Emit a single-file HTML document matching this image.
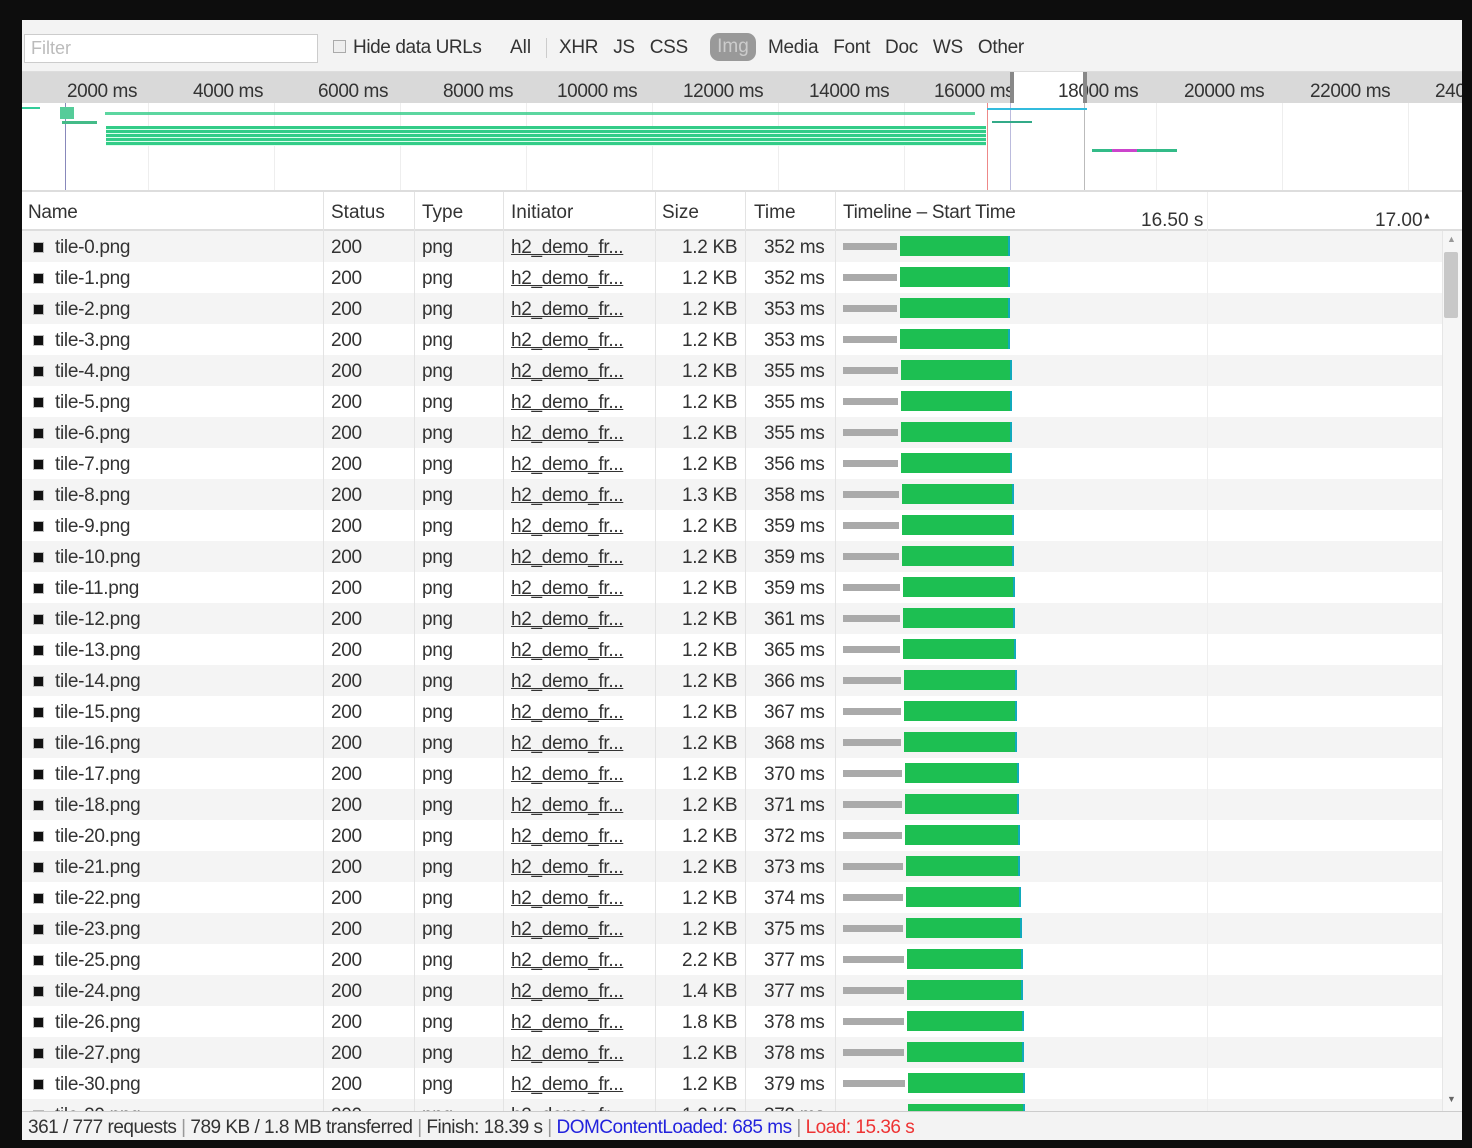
<!DOCTYPE html>
<html><head><meta charset="utf-8"><style>
*{margin:0;padding:0;box-sizing:border-box}
body{width:1472px;height:1148px;background:#0d0d0d;position:relative;overflow:hidden;font-family:"Liberation Sans",sans-serif;color:#333;font-size:19px}
.p{position:absolute;left:22px;top:20px;width:1440px;height:1120px;background:#fff;overflow:hidden}
.a{position:absolute;white-space:nowrap}
.tb{left:0;top:0;width:1440px;height:52px;background:#f3f3f3;border-bottom:1px solid #ddd}
.rl{left:0;top:52px;width:1440px;height:31px;background:#d9d9d9}
.row{position:absolute;left:0;width:1420px;height:31px}
.row span{position:absolute;top:6px;white-space:nowrap;letter-spacing:-0.3px}
.g{background:#f4f4f4}
.ic{position:absolute;left:11px;top:11px;width:11px;height:11px;background:#111;border:1px solid #bbb}
.ini{text-decoration:underline;color:#333}
.vl{position:absolute;top:0;width:1px;height:100%;background:#e3e3e3}
</style></head><body>
<div class="p">
<div class="a tb"></div>
<div class="a" style="left:2px;top:14px;width:294px;height:29px;border:1px solid #ccc;background:#fff;color:#bbb;padding:3px 6px;font-size:18px">Filter</div>
<div class="a" style="left:311px;top:20px;width:13px;height:13px;border:1px solid #aaa;background:#eee"></div>
<div class="a" style="left:331px;top:17px;letter-spacing:-0.4px">Hide data URLs</div>
<div class="a" style="left:488px;top:17px">All</div>
<div class="a" style="left:524px;top:18px;width:1px;height:20px;background:#ccc"></div>
<div class="a" style="left:537px;top:17px;word-spacing:10px;letter-spacing:-0.3px">XHR JS CSS</div>
<div class="a" style="left:688px;top:13px;width:46px;height:28px;border-radius:9px;background:#999;color:#ccc;text-align:center;padding-top:3px">Img</div>
<div class="a" style="left:746px;top:17px;word-spacing:10px;letter-spacing:-0.3px">Media Font Doc WS Other</div>
<div class="a rl"></div>
<div class="a" style="left:990px;top:52px;width:73px;height:31px;background:#fff"></div>
<div class="a" style="left:0;top:61px;font-size:19px;letter-spacing:-0.4px">
<span class="a" style="left:45px">2000 ms</span><span class="a" style="left:171px">4000 ms</span><span class="a" style="left:296px">6000 ms</span><span class="a" style="left:421px">8000 ms</span><span class="a" style="left:535px">10000 ms</span><span class="a" style="left:661px">12000 ms</span><span class="a" style="left:787px">14000 ms</span><span class="a" style="left:912px">16000 ms</span><span class="a" style="left:1036px">18000 ms</span><span class="a" style="left:1162px">20000 ms</span><span class="a" style="left:1288px">22000 ms</span><span class="a" style="left:1413px">24000 ms</span></div>
<div class="a" style="left:988px;top:52px;width:4px;height:31px;background:#888"></div>
<div class="a" style="left:1061px;top:52px;width:4px;height:31px;background:#888"></div>
<div class="a" style="left:126px;top:83px;width:1px;height:87px;background:#eee"></div>
<div class="a" style="left:252px;top:83px;width:1px;height:87px;background:#eee"></div>
<div class="a" style="left:378px;top:83px;width:1px;height:87px;background:#eee"></div>
<div class="a" style="left:504px;top:83px;width:1px;height:87px;background:#eee"></div>
<div class="a" style="left:630px;top:83px;width:1px;height:87px;background:#eee"></div>
<div class="a" style="left:756px;top:83px;width:1px;height:87px;background:#eee"></div>
<div class="a" style="left:882px;top:83px;width:1px;height:87px;background:#eee"></div>
<div class="a" style="left:1134px;top:83px;width:1px;height:87px;background:#eee"></div>
<div class="a" style="left:1260px;top:83px;width:1px;height:87px;background:#eee"></div>
<div class="a" style="left:1386px;top:83px;width:1px;height:87px;background:#eee"></div>
<div class="a" style="left:43px;top:83px;width:1px;height:87px;background:#8888bb"></div>
<div class="a" style="left:965px;top:83px;width:1px;height:87px;background:#e88"></div>
<div class="a" style="left:988px;top:83px;width:1px;height:87px;background:#bbd"></div>
<div class="a" style="left:1062px;top:83px;width:1px;height:87px;background:#bbb"></div>
<div class="a" style="left:0;top:87px;width:18px;height:2px;background:#3c9"></div>
<div class="a" style="left:38px;top:87px;width:14px;height:12px;background:#5c9"></div>
<div class="a" style="left:40px;top:101px;width:35px;height:3px;background:#4b8"></div>
<div class="a" style="left:83px;top:92px;width:870px;height:3px;background:#3c8c"></div>
<div class="a" style="left:84px;top:106px;width:880px;height:20px;background:repeating-linear-gradient(#3c8 0 3px,#dfe 3px 4px)"></div>
<div class="a" style="left:965px;top:88px;width:100px;height:2px;background:#3bd"></div>
<div class="a" style="left:970px;top:101px;width:40px;height:2px;background:#3a8"></div>
<div class="a" style="left:1070px;top:129px;width:85px;height:3px;background:#3b8"></div>
<div class="a" style="left:1090px;top:129px;width:25px;height:3px;background:#c4c"></div>
<div class="a" style="left:0;top:170px;width:1440px;height:2px;background:#ddd"></div>
<div class="a" style="left:0;top:172px;width:1440px;height:39px;background:#fff;border-bottom:2px solid #ddd"></div>
<div class="a" style="left:6px;top:182px;letter-spacing:-0.3px">Name</div>
<div class="a" style="left:309px;top:182px">Status</div>
<div class="a" style="left:400px;top:182px">Type</div>
<div class="a" style="left:489px;top:182px">Initiator</div>
<div class="a" style="left:640px;top:182px">Size</div>
<div class="a" style="left:732px;top:182px">Time</div>
<div class="a" style="left:821px;top:182px;letter-spacing:-0.3px">Timeline – Start Time</div>
<div class="a" style="left:1119px;top:190px">16.50 s</div>
<div class="a" style="left:1353px;top:190px">17.00<sup style="font-size:9px">▲</sup></div>
<div class="a" style="left:0;top:211px;width:1420px;height:880px">
<div class="row g" style="top:0"></div><div class="row g" style="top:62px"></div><div class="row g" style="top:124px"></div><div class="row g" style="top:186px"></div><div class="row g" style="top:248px"></div><div class="row g" style="top:310px"></div><div class="row g" style="top:372px"></div><div class="row g" style="top:434px"></div><div class="row g" style="top:496px"></div><div class="row g" style="top:558px"></div><div class="row g" style="top:620px"></div><div class="row g" style="top:682px"></div><div class="row g" style="top:744px"></div><div class="row g" style="top:806px"></div><div class="row g" style="top:868px"></div>
</div>
<div class="a" style="left:0;top:172px;width:1420px;height:920px">
<div class="vl" style="left:301px"></div><div class="vl" style="left:392px"></div><div class="vl" style="left:481px"></div><div class="vl" style="left:633px"></div><div class="vl" style="left:723px"></div><div class="vl" style="left:813px"></div><div class="vl" style="left:1185px;background:#eee"></div>
</div>
<div class="a" style="left:0;top:211px;width:1420px;height:881px;overflow:hidden">
<div class="row" style="top:0px"><i class="ic"></i><span style="left:33px">tile-0.png</span><span style="left:309px">200</span><span style="left:400px">png</span><span class="ini" style="left:489px">h2_demo_fr...</span><span style="left:660px">1.2 KB</span><span style="left:742px">352 ms</span><b class="a" style="left:821px;top:12px;width:54px;height:7px;background:#aaa"></b><b class="a" style="left:878px;top:5px;width:110px;height:20px;background:#1dbf52;border-right:2px solid #1ab"></b></div>
<div class="row" style="top:31px"><i class="ic"></i><span style="left:33px">tile-1.png</span><span style="left:309px">200</span><span style="left:400px">png</span><span class="ini" style="left:489px">h2_demo_fr...</span><span style="left:660px">1.2 KB</span><span style="left:742px">352 ms</span><b class="a" style="left:821px;top:12px;width:54px;height:7px;background:#aaa"></b><b class="a" style="left:878px;top:5px;width:110px;height:20px;background:#1dbf52;border-right:2px solid #1ab"></b></div>
<div class="row" style="top:62px"><i class="ic"></i><span style="left:33px">tile-2.png</span><span style="left:309px">200</span><span style="left:400px">png</span><span class="ini" style="left:489px">h2_demo_fr...</span><span style="left:660px">1.2 KB</span><span style="left:742px">353 ms</span><b class="a" style="left:821px;top:12px;width:54px;height:7px;background:#aaa"></b><b class="a" style="left:878px;top:5px;width:110px;height:20px;background:#1dbf52;border-right:2px solid #1ab"></b></div>
<div class="row" style="top:93px"><i class="ic"></i><span style="left:33px">tile-3.png</span><span style="left:309px">200</span><span style="left:400px">png</span><span class="ini" style="left:489px">h2_demo_fr...</span><span style="left:660px">1.2 KB</span><span style="left:742px">353 ms</span><b class="a" style="left:821px;top:12px;width:54px;height:7px;background:#aaa"></b><b class="a" style="left:878px;top:5px;width:110px;height:20px;background:#1dbf52;border-right:2px solid #1ab"></b></div>
<div class="row" style="top:124px"><i class="ic"></i><span style="left:33px">tile-4.png</span><span style="left:309px">200</span><span style="left:400px">png</span><span class="ini" style="left:489px">h2_demo_fr...</span><span style="left:660px">1.2 KB</span><span style="left:742px">355 ms</span><b class="a" style="left:821px;top:12px;width:55px;height:7px;background:#aaa"></b><b class="a" style="left:879px;top:5px;width:111px;height:20px;background:#1dbf52;border-right:2px solid #1ab"></b></div>
<div class="row" style="top:155px"><i class="ic"></i><span style="left:33px">tile-5.png</span><span style="left:309px">200</span><span style="left:400px">png</span><span class="ini" style="left:489px">h2_demo_fr...</span><span style="left:660px">1.2 KB</span><span style="left:742px">355 ms</span><b class="a" style="left:821px;top:12px;width:55px;height:7px;background:#aaa"></b><b class="a" style="left:879px;top:5px;width:111px;height:20px;background:#1dbf52;border-right:2px solid #1ab"></b></div>
<div class="row" style="top:186px"><i class="ic"></i><span style="left:33px">tile-6.png</span><span style="left:309px">200</span><span style="left:400px">png</span><span class="ini" style="left:489px">h2_demo_fr...</span><span style="left:660px">1.2 KB</span><span style="left:742px">355 ms</span><b class="a" style="left:821px;top:12px;width:55px;height:7px;background:#aaa"></b><b class="a" style="left:879px;top:5px;width:111px;height:20px;background:#1dbf52;border-right:2px solid #1ab"></b></div>
<div class="row" style="top:217px"><i class="ic"></i><span style="left:33px">tile-7.png</span><span style="left:309px">200</span><span style="left:400px">png</span><span class="ini" style="left:489px">h2_demo_fr...</span><span style="left:660px">1.2 KB</span><span style="left:742px">356 ms</span><b class="a" style="left:821px;top:12px;width:55px;height:7px;background:#aaa"></b><b class="a" style="left:879px;top:5px;width:111px;height:20px;background:#1dbf52;border-right:2px solid #1ab"></b></div>
<div class="row" style="top:248px"><i class="ic"></i><span style="left:33px">tile-8.png</span><span style="left:309px">200</span><span style="left:400px">png</span><span class="ini" style="left:489px">h2_demo_fr...</span><span style="left:660px">1.3 KB</span><span style="left:742px">358 ms</span><b class="a" style="left:821px;top:12px;width:56px;height:7px;background:#aaa"></b><b class="a" style="left:880px;top:5px;width:112px;height:20px;background:#1dbf52;border-right:2px solid #1ab"></b></div>
<div class="row" style="top:279px"><i class="ic"></i><span style="left:33px">tile-9.png</span><span style="left:309px">200</span><span style="left:400px">png</span><span class="ini" style="left:489px">h2_demo_fr...</span><span style="left:660px">1.2 KB</span><span style="left:742px">359 ms</span><b class="a" style="left:821px;top:12px;width:56px;height:7px;background:#aaa"></b><b class="a" style="left:880px;top:5px;width:112px;height:20px;background:#1dbf52;border-right:2px solid #1ab"></b></div>
<div class="row" style="top:310px"><i class="ic"></i><span style="left:33px">tile-10.png</span><span style="left:309px">200</span><span style="left:400px">png</span><span class="ini" style="left:489px">h2_demo_fr...</span><span style="left:660px">1.2 KB</span><span style="left:742px">359 ms</span><b class="a" style="left:821px;top:12px;width:56px;height:7px;background:#aaa"></b><b class="a" style="left:880px;top:5px;width:112px;height:20px;background:#1dbf52;border-right:2px solid #1ab"></b></div>
<div class="row" style="top:341px"><i class="ic"></i><span style="left:33px">tile-11.png</span><span style="left:309px">200</span><span style="left:400px">png</span><span class="ini" style="left:489px">h2_demo_fr...</span><span style="left:660px">1.2 KB</span><span style="left:742px">359 ms</span><b class="a" style="left:821px;top:12px;width:57px;height:7px;background:#aaa"></b><b class="a" style="left:881px;top:5px;width:112px;height:20px;background:#1dbf52;border-right:2px solid #1ab"></b></div>
<div class="row" style="top:372px"><i class="ic"></i><span style="left:33px">tile-12.png</span><span style="left:309px">200</span><span style="left:400px">png</span><span class="ini" style="left:489px">h2_demo_fr...</span><span style="left:660px">1.2 KB</span><span style="left:742px">361 ms</span><b class="a" style="left:821px;top:12px;width:57px;height:7px;background:#aaa"></b><b class="a" style="left:881px;top:5px;width:112px;height:20px;background:#1dbf52;border-right:2px solid #1ab"></b></div>
<div class="row" style="top:403px"><i class="ic"></i><span style="left:33px">tile-13.png</span><span style="left:309px">200</span><span style="left:400px">png</span><span class="ini" style="left:489px">h2_demo_fr...</span><span style="left:660px">1.2 KB</span><span style="left:742px">365 ms</span><b class="a" style="left:821px;top:12px;width:57px;height:7px;background:#aaa"></b><b class="a" style="left:881px;top:5px;width:113px;height:20px;background:#1dbf52;border-right:2px solid #1ab"></b></div>
<div class="row" style="top:434px"><i class="ic"></i><span style="left:33px">tile-14.png</span><span style="left:309px">200</span><span style="left:400px">png</span><span class="ini" style="left:489px">h2_demo_fr...</span><span style="left:660px">1.2 KB</span><span style="left:742px">366 ms</span><b class="a" style="left:821px;top:12px;width:58px;height:7px;background:#aaa"></b><b class="a" style="left:882px;top:5px;width:113px;height:20px;background:#1dbf52;border-right:2px solid #1ab"></b></div>
<div class="row" style="top:465px"><i class="ic"></i><span style="left:33px">tile-15.png</span><span style="left:309px">200</span><span style="left:400px">png</span><span class="ini" style="left:489px">h2_demo_fr...</span><span style="left:660px">1.2 KB</span><span style="left:742px">367 ms</span><b class="a" style="left:821px;top:12px;width:58px;height:7px;background:#aaa"></b><b class="a" style="left:882px;top:5px;width:113px;height:20px;background:#1dbf52;border-right:2px solid #1ab"></b></div>
<div class="row" style="top:496px"><i class="ic"></i><span style="left:33px">tile-16.png</span><span style="left:309px">200</span><span style="left:400px">png</span><span class="ini" style="left:489px">h2_demo_fr...</span><span style="left:660px">1.2 KB</span><span style="left:742px">368 ms</span><b class="a" style="left:821px;top:12px;width:58px;height:7px;background:#aaa"></b><b class="a" style="left:882px;top:5px;width:113px;height:20px;background:#1dbf52;border-right:2px solid #1ab"></b></div>
<div class="row" style="top:527px"><i class="ic"></i><span style="left:33px">tile-17.png</span><span style="left:309px">200</span><span style="left:400px">png</span><span class="ini" style="left:489px">h2_demo_fr...</span><span style="left:660px">1.2 KB</span><span style="left:742px">370 ms</span><b class="a" style="left:821px;top:12px;width:59px;height:7px;background:#aaa"></b><b class="a" style="left:883px;top:5px;width:114px;height:20px;background:#1dbf52;border-right:2px solid #1ab"></b></div>
<div class="row" style="top:558px"><i class="ic"></i><span style="left:33px">tile-18.png</span><span style="left:309px">200</span><span style="left:400px">png</span><span class="ini" style="left:489px">h2_demo_fr...</span><span style="left:660px">1.2 KB</span><span style="left:742px">371 ms</span><b class="a" style="left:821px;top:12px;width:59px;height:7px;background:#aaa"></b><b class="a" style="left:883px;top:5px;width:114px;height:20px;background:#1dbf52;border-right:2px solid #1ab"></b></div>
<div class="row" style="top:589px"><i class="ic"></i><span style="left:33px">tile-20.png</span><span style="left:309px">200</span><span style="left:400px">png</span><span class="ini" style="left:489px">h2_demo_fr...</span><span style="left:660px">1.2 KB</span><span style="left:742px">372 ms</span><b class="a" style="left:821px;top:12px;width:59px;height:7px;background:#aaa"></b><b class="a" style="left:883px;top:5px;width:115px;height:20px;background:#1dbf52;border-right:2px solid #1ab"></b></div>
<div class="row" style="top:620px"><i class="ic"></i><span style="left:33px">tile-21.png</span><span style="left:309px">200</span><span style="left:400px">png</span><span class="ini" style="left:489px">h2_demo_fr...</span><span style="left:660px">1.2 KB</span><span style="left:742px">373 ms</span><b class="a" style="left:821px;top:12px;width:60px;height:7px;background:#aaa"></b><b class="a" style="left:884px;top:5px;width:114px;height:20px;background:#1dbf52;border-right:2px solid #1ab"></b></div>
<div class="row" style="top:651px"><i class="ic"></i><span style="left:33px">tile-22.png</span><span style="left:309px">200</span><span style="left:400px">png</span><span class="ini" style="left:489px">h2_demo_fr...</span><span style="left:660px">1.2 KB</span><span style="left:742px">374 ms</span><b class="a" style="left:821px;top:12px;width:60px;height:7px;background:#aaa"></b><b class="a" style="left:884px;top:5px;width:115px;height:20px;background:#1dbf52;border-right:2px solid #1ab"></b></div>
<div class="row" style="top:682px"><i class="ic"></i><span style="left:33px">tile-23.png</span><span style="left:309px">200</span><span style="left:400px">png</span><span class="ini" style="left:489px">h2_demo_fr...</span><span style="left:660px">1.2 KB</span><span style="left:742px">375 ms</span><b class="a" style="left:821px;top:12px;width:60px;height:7px;background:#aaa"></b><b class="a" style="left:884px;top:5px;width:116px;height:20px;background:#1dbf52;border-right:2px solid #1ab"></b></div>
<div class="row" style="top:713px"><i class="ic"></i><span style="left:33px">tile-25.png</span><span style="left:309px">200</span><span style="left:400px">png</span><span class="ini" style="left:489px">h2_demo_fr...</span><span style="left:660px">2.2 KB</span><span style="left:742px">377 ms</span><b class="a" style="left:821px;top:12px;width:61px;height:7px;background:#aaa"></b><b class="a" style="left:885px;top:5px;width:116px;height:20px;background:#1dbf52;border-right:2px solid #1ab"></b></div>
<div class="row" style="top:744px"><i class="ic"></i><span style="left:33px">tile-24.png</span><span style="left:309px">200</span><span style="left:400px">png</span><span class="ini" style="left:489px">h2_demo_fr...</span><span style="left:660px">1.4 KB</span><span style="left:742px">377 ms</span><b class="a" style="left:821px;top:12px;width:61px;height:7px;background:#aaa"></b><b class="a" style="left:885px;top:5px;width:116px;height:20px;background:#1dbf52;border-right:2px solid #1ab"></b></div>
<div class="row" style="top:775px"><i class="ic"></i><span style="left:33px">tile-26.png</span><span style="left:309px">200</span><span style="left:400px">png</span><span class="ini" style="left:489px">h2_demo_fr...</span><span style="left:660px">1.8 KB</span><span style="left:742px">378 ms</span><b class="a" style="left:821px;top:12px;width:61px;height:7px;background:#aaa"></b><b class="a" style="left:885px;top:5px;width:117px;height:20px;background:#1dbf52;border-right:2px solid #1ab"></b></div>
<div class="row" style="top:806px"><i class="ic"></i><span style="left:33px">tile-27.png</span><span style="left:309px">200</span><span style="left:400px">png</span><span class="ini" style="left:489px">h2_demo_fr...</span><span style="left:660px">1.2 KB</span><span style="left:742px">378 ms</span><b class="a" style="left:821px;top:12px;width:61px;height:7px;background:#aaa"></b><b class="a" style="left:885px;top:5px;width:117px;height:20px;background:#1dbf52;border-right:2px solid #1ab"></b></div>
<div class="row" style="top:837px"><i class="ic"></i><span style="left:33px">tile-30.png</span><span style="left:309px">200</span><span style="left:400px">png</span><span class="ini" style="left:489px">h2_demo_fr...</span><span style="left:660px">1.2 KB</span><span style="left:742px">379 ms</span><b class="a" style="left:821px;top:12px;width:62px;height:7px;background:#aaa"></b><b class="a" style="left:886px;top:5px;width:117px;height:20px;background:#1dbf52;border-right:2px solid #1ab"></b></div>
<div class="row" style="top:868px"><i class="ic"></i><span style="left:33px">tile-29.png</span><span style="left:309px">200</span><span style="left:400px">png</span><span class="ini" style="left:489px">h2_demo_fr...</span><span style="left:660px">1.2 KB</span><span style="left:742px">379 ms</span><b class="a" style="left:821px;top:12px;width:62px;height:7px;background:#aaa"></b><b class="a" style="left:886px;top:5px;width:117px;height:20px;background:#1dbf52;border-right:2px solid #1ab"></b></div>
</div>
<div class="a" style="left:1420px;top:211px;width:20px;height:881px;background:#f6f6f6;border-left:1px solid #e6e6e6"></div>
<div class="a" style="left:1425px;top:214px;font-size:9px;color:#999">▲</div>
<div class="a" style="left:1422px;top:232px;width:14px;height:66px;background:#c8c8c8;border-radius:2px"></div>
<div class="a" style="left:1425px;top:1074px;font-size:9px;color:#666">▼</div>
<div class="a" style="left:0;top:1091px;width:1440px;height:29px;background:#f3f3f3;border-top:1px solid #ccc"></div>
<div class="a" style="left:6px;top:1097px;letter-spacing:-0.5px">361 / 777 requests <span style="color:#999">|</span> 789 KB / 1.8 MB transferred <span style="color:#999">|</span> Finish: 18.39 s <span style="color:#999">|</span> <span style="color:#2222dd">DOMContentLoaded: 685 ms</span> <span style="color:#999">|</span> <span style="color:#e33">Load: 15.36 s</span></div>
</div>
</body></html>
